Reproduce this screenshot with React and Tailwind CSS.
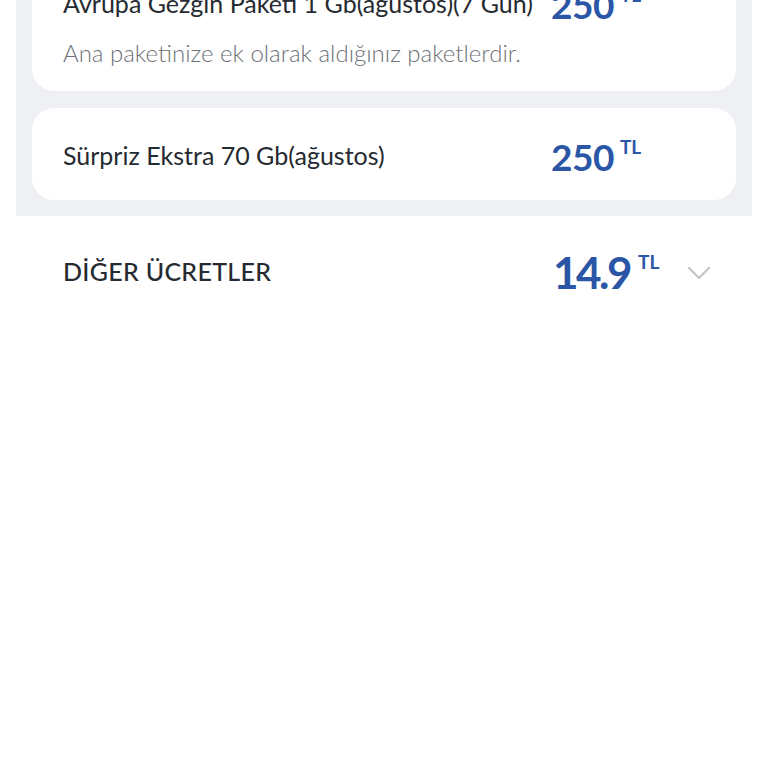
import React from 'react';

function Price({ value, big }) {
  return (
    <div className="flex items-start text-[#2b56a6]">
      <span
        className={
          big
            ? 'text-[44px] leading-none font-bold tracking-[-2.5px]'
            : 'text-[37px] leading-none font-bold tracking-[-0.5px]'
        }
      >
        {value}
      </span>
      <span className={big ? 'ml-[8px] mt-[2px] text-[19px] leading-none font-bold' : 'ml-[6px] mt-[-1px] text-[19px] leading-none font-bold'}>
        TL
      </span>
    </div>
  );
}

function PackageCard({ title, price, note }) {
  return (
    <div className="bg-white rounded-[22px] pl-[31px] pt-[24px] pb-[20px]">
      <div className="flex items-center h-[48px]">
        <div className="w-[488px] text-[25px] text-[#262a31] whitespace-nowrap">{title}</div>
        <Price value={price} />
      </div>
      {note && (
        <div className="mt-[10px] pb-[3px] text-[24px] leading-[30px] text-[#6d7178] font-light">{note}</div>
      )}
    </div>
  );
}

export default function App() {
  return (
    <div className="w-[768px] h-[768px] overflow-hidden bg-white font-['Lato',sans-serif]">
      <div className="mx-[16px] bg-[#eef0f3] px-[16px] pb-[16px] -mt-[47px] flex flex-col gap-[17px]">
        <div className="pt-[3px]">
          <PackageCard
            title="Avrupa Gezgin Paketi 1 Gb(ağustos)(7 Gün)"
            price="250"
            note="Ana paketinize ek olarak aldığınız paketlerdir."
          />
        </div>
        <PackageCard title="Sürpriz Ekstra 70 Gb(ağustos)" price="250" />
      </div>

      <div className="flex items-center h-[112px] pl-[63px]">
        <div className="w-[490px] text-[25px] text-[#262a31] font-medium tracking-[0.3px]">DİĞER ÜCRETLER</div>
        <Price value="14.9" big />
        <svg className="ml-[28px] mt-[2px]" width="24" height="14" viewBox="0 0 24 14" fill="none">
          <polyline points="2,2 12,12 22,2" stroke="#c4c6c9" strokeWidth="2.4" strokeLinecap="round" strokeLinejoin="round" />
        </svg>
      </div>
    </div>
  );
}
